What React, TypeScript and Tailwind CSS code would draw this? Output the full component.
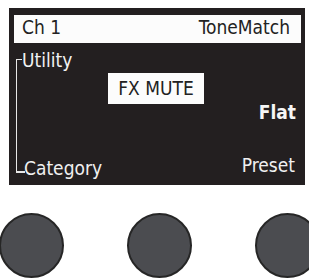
import React from "react";

const font = {
  fontFamily: '"DejaVu Sans Condensed", "DejaVu Sans", "Liberation Sans", sans-serif',
};

export default function App() {
  return (
    <div
      className="w-[309px] h-[279px] overflow-hidden bg-white flex flex-col"
      style={font}
    >
      <div className="ml-[9px] mt-[8px] w-[296px] h-[177px] bg-[#231f20] relative flex flex-col text-[19px] leading-[19px] font-stretch-condensed">
        {/* header */}
        <div className="mt-[7px] ml-[5px] w-[287px] h-[28px] bg-[#fcfcfc] flex items-center justify-between pl-[8px] pr-[11px] text-[#222222]">
          <span className="-mt-[3px]">Ch 1</span>
          <span className="-mt-[3px]">ToneMatch</span>
        </div>

        {/* bracket */}
        <div className="absolute left-[7px] top-[51px] w-[6px] h-[113px] border-l-[1.5px] border-t border-[#e8e8e8]" />
        <div className="absolute left-[7px] top-[163px] w-[9px] h-[1.5px] bg-[#e8e8e8]" />

        {/* Utility */}
        <div className="mt-[8px] ml-[13px] text-[#f2f2f2]">Utility</div>

        {/* FX MUTE + Flat */}
        <div className="mt-[3px] flex items-start justify-between pr-[9px]">
          <div className="ml-[99px] w-[96px] h-[31px] bg-[#fcfcfc] flex items-center justify-center text-[#222222]">
            <span className="-mt-[1px]">FX MUTE</span>
          </div>
          <div className="mt-[30px] font-bold text-[#f6f6f6]">Flat</div>
        </div>

        {/* bottom row */}
        <div className="mt-auto mb-[7px] flex items-end justify-between pl-[15px] pr-[10px] text-[#f0f0f0]">
          <span>Category</span>
          <span className="mb-[3px]">Preset</span>
        </div>
      </div>

      {/* knobs */}
      <div className="mt-[28px] -ml-[1px] flex gap-[63px] shrink-0">
        <div className="w-[65px] h-[65px] shrink-0 rounded-full bg-[#4b4c50] border-2 border-[#262626]" />
        <div className="w-[65px] h-[65px] shrink-0 rounded-full bg-[#4b4c50] border-2 border-[#262626]" />
        <div className="w-[65px] h-[65px] shrink-0 rounded-full bg-[#4b4c50] border-2 border-[#262626]" />
      </div>
    </div>
  );
}
